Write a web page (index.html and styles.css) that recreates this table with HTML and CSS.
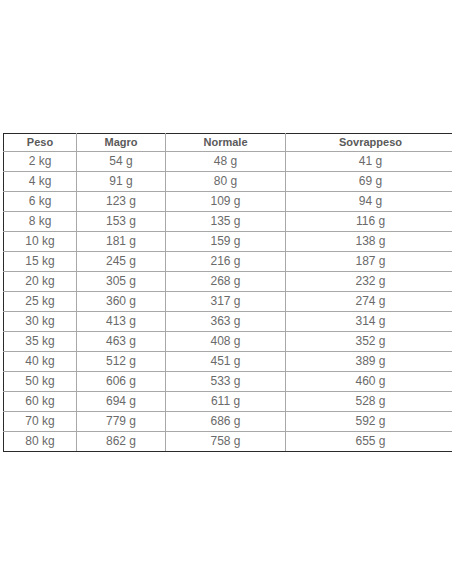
FILE: index.html
```html
<!DOCTYPE html>
<html>
<head>
<meta charset="utf-8">
<link rel="stylesheet" href="styles.css">
</head>
<body>
<div class="page">
<table class="dose">
<colgroup>
<col class="c1"><col class="c2"><col class="c3"><col class="c4">
</colgroup>
<thead>
<tr><th>Peso</th><th>Magro</th><th>Normale</th><th>Sovrappeso</th></tr>
</thead>
<tbody>
<tr><td>2 kg</td><td>54 g</td><td>48 g</td><td>41 g</td></tr>
<tr><td>4 kg</td><td>91 g</td><td>80 g</td><td>69 g</td></tr>
<tr><td>6 kg</td><td>123 g</td><td>109 g</td><td>94 g</td></tr>
<tr><td>8 kg</td><td>153 g</td><td>135 g</td><td>116 g</td></tr>
<tr><td>10 kg</td><td>181 g</td><td>159 g</td><td>138 g</td></tr>
<tr><td>15 kg</td><td>245 g</td><td>216 g</td><td>187 g</td></tr>
<tr><td>20 kg</td><td>305 g</td><td>268 g</td><td>232 g</td></tr>
<tr><td>25 kg</td><td>360 g</td><td>317 g</td><td>274 g</td></tr>
<tr><td>30 kg</td><td>413 g</td><td>363 g</td><td>314 g</td></tr>
<tr><td>35 kg</td><td>463 g</td><td>408 g</td><td>352 g</td></tr>
<tr><td>40 kg</td><td>512 g</td><td>451 g</td><td>389 g</td></tr>
<tr><td>50 kg</td><td>606 g</td><td>533 g</td><td>460 g</td></tr>
<tr><td>60 kg</td><td>694 g</td><td>611 g</td><td>528 g</td></tr>
<tr><td>70 kg</td><td>779 g</td><td>686 g</td><td>592 g</td></tr>
<tr><td>80 kg</td><td>862 g</td><td>758 g</td><td>655 g</td></tr>
</tbody>
</table>
</div>
</body>
</html>
```
FILE: styles.css
```css
html, body {
  margin: 0;
  padding: 0;
  background: #fff;
  overflow: hidden;
}
.page {
  height: 584px;
  display: flex;
  align-items: center;
  padding-left: 3px;
}
.dose {
  border-collapse: collapse;
  table-layout: fixed;
  width: 452px;
  flex: none;
  border: 1px solid #2a2a2a;
  font-family: "Liberation Sans", Arial, sans-serif;
  font-size: 12px;
  color: #6a6a6a;
}
.c1 { width: 73px; }
.c2 { width: 89px; }
.c3 { width: 120px; }
.c4 { width: 170px; }
.dose th, .dose td {
  border: 1px solid #a8a8a8;
  height: 19px;
  padding: 0;
  text-align: center;
  line-height: 19px;
}
.dose th {
  font-weight: bold;
  color: #5a5a5a;
  font-size: 11px;
  height: 17px;
  line-height: 17px;
}
.dose thead tr th { border-top: 1px solid #2a2a2a; }
.dose tbody tr:last-child td { border-bottom: 1px solid #2a2a2a; }
.dose tr > :first-child { border-left: 1px solid #2a2a2a; }
```
